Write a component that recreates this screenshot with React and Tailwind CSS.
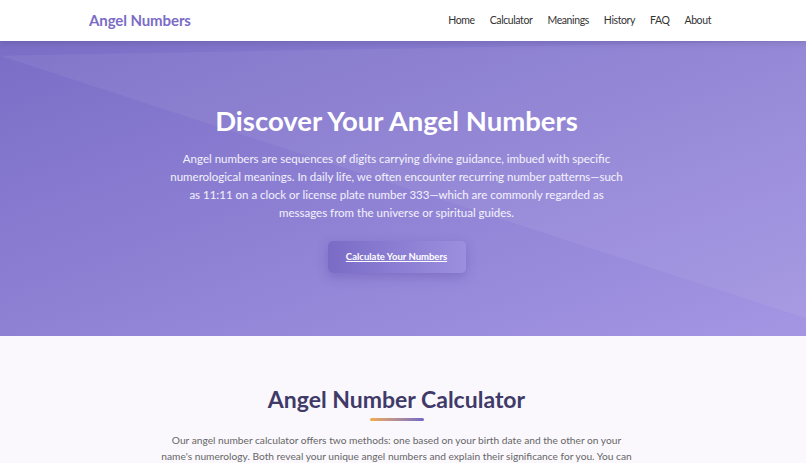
import React from 'react';

const links = ['Home', 'Calculator', 'Meanings', 'History', 'FAQ', 'About'];

const Header = () => (
  <header className="relative z-10 h-[41px] bg-white shadow-[0_2px_6px_rgba(0,0,0,0.12)]">
    <div className="ml-[89px] flex h-full w-[622px] items-center justify-between">
      <a className="text-[15px] font-bold tracking-[-0.1px] text-[#7a6cc6]">Angel Numbers</a>
      <nav className="flex items-center gap-[15px]">
        {links.map((l) => (
          <a key={l} className="text-[10.5px] tracking-[-0.4px] text-[#333]">
            {l}
          </a>
        ))}
      </nav>
    </div>
  </header>
);

const Hero = () => (
  <section className="relative h-[295px] overflow-hidden bg-gradient-to-br from-[#7a6dc6] to-[#a496e3]">
    {/* light diagonal band, upper right */}
    <div className="absolute inset-0 bg-white/[0.06] [clip-path:polygon(0_5%,100%_0,100%_94%)]"></div>
    <div className="relative flex flex-col items-center pt-[62px] pr-[13px] text-center">
      <h1 className="text-[27.5px] font-bold leading-[36px] text-white">Discover Your Angel Numbers</h1>
      <p className="mt-[11px] w-[458px] text-[11.5px] leading-[18px] text-white/90">
        Angel numbers are sequences of digits carrying divine guidance, imbued with specific numerological meanings. In
        daily life, we often encounter recurring number patterns—such as 11:11 on a clock or license plate number
        333—which are commonly regarded as messages from the universe or spiritual guides.
      </p>
      <a className="mt-[19px] flex h-[32px] w-[138px] items-center justify-center rounded-[5px] bg-gradient-to-r from-[#7a6cc6] to-[#9c8fdf] text-[9.5px] font-bold text-white underline shadow-[0_4px_12px_rgba(60,40,140,0.25)]">
        Calculate Your Numbers
      </a>
    </div>
  </section>
);

const Calculator = () => (
  <section className="flex flex-col items-center bg-[#faf8fd] pt-[48px] pr-[13px] pb-10 text-center">
    <h2 className="text-[23px] font-bold leading-[30px] text-[#3f3a68]">Angel Number Calculator</h2>
    <div className="mt-[4px] h-[3px] w-[54px] rounded-full bg-gradient-to-r from-[#f2ab4a] to-[#7567c4]"></div>
    <p className="mt-[11px] w-[478px] text-[10.2px] leading-[16px] text-[#666]">
      Our angel number calculator offers two methods: one based on your birth date and the other on your name's
      numerology. Both reveal your unique angel numbers and explain their significance for you. You can
    </p>
  </section>
);

export default function App() {
  return (
    <div className="min-h-screen bg-[#faf8fd] font-['Lato',sans-serif]">
      <Header />
      <Hero />
      <Calculator />
    </div>
  );
}
